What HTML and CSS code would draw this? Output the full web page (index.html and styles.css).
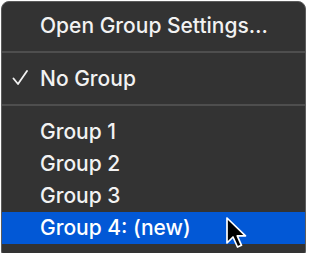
FILE: index.html
```html
<!DOCTYPE html>
<html>
<head>
  <title>Group Menu</title>
  <link rel="stylesheet" href="styles.css">
</head>
<body>

<div class="menu">
  <div class="item">Open Group Settings…</div>
  <div class="separator"></div>
  <div class="item">
    <svg class="check" width="18" height="18" viewBox="0 0 18 18">
      <path d="M1.5 8.5 L6 14 L15 1" fill="none" stroke="#f2f2f2" stroke-width="1.8" stroke-linecap="round" stroke-linejoin="round"/>
    </svg>
    No Group
  </div>
  <div class="separator"></div>
  <div class="item">Group 1</div>
  <div class="item">Group 2</div>
  <div class="item">Group 3</div>
  <div class="item selected">Group 4: (new)</div>

  <!-- mouse pointer over the selected row -->
  <svg class="cursor" width="26" height="34" viewBox="0 0 26 34">
    <path d="M2 2 L2 27 L8 21 L12.5 31 L16.5 29.3 L12.3 19.8 L20.5 19.8 Z"
          fill="#000" stroke="#fff" stroke-width="1.7" stroke-linejoin="round"/>
  </svg>
</div>

</body>
</html>
```

FILE: styles.css
```css
body {
  margin: 0;
  background: #fff;
  font-family: Inter, "Noto Sans", sans-serif;
}

.menu {
  position: relative;
  margin: 1px 0 0 1px;
  width: 303px;
  height: 241px;
  padding: 8px 0 7px;
  background: #333333;
  border: 1px solid #5c5c5c;
  border-radius: 8px;
  color: #f2f2f2;
  font-size: 21px;
  font-weight: 500;
}

.item {
  position: relative;
  height: 32px;
  line-height: 32px;
  padding-left: 38px;
}

.check {
  position: absolute;
  left: 10px;
  top: 7px;
}

.separator {
  height: 2px;
  margin: 9px 0 10px;
  background: #4e4e4e;
}

.selected {
  background: #0258d6;
  color: #fff;
}

.cursor {
  position: absolute;
  left: 223px;
  top: 214px;
}
```
